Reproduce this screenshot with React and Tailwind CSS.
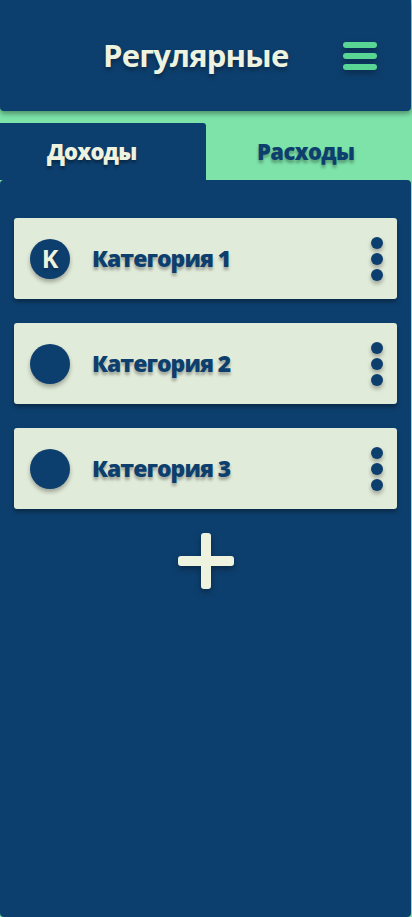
import React from "react";

const font = { fontFamily: '"Open Sans", "Noto Sans", sans-serif' };

function Card({ label, letter }) {
  return (
    <div className="flex h-[81px] items-center rounded-[3px] bg-[#e1ebd9] pl-[16px] pr-[14px] shadow-[0_3px_4px_rgba(0,0,0,0.35)]">
      <div className="flex h-[40px] w-[40px] items-center justify-center rounded-full bg-[#0d3f6e] shadow-[0_3px_4px_rgba(0,0,0,0.3)]">
        {letter && (
          <span className="text-[25px] font-bold leading-none text-[#eef3e0] [text-shadow:0_2px_3px_rgba(0,0,0,0.3)]">{letter}</span>
        )}
      </div>
      <span className="ml-[22px] flex-1 text-[23px] font-extrabold tracking-[-1px] text-[#0d3f6e] [text-shadow:0_3px_3px_rgba(0,0,0,0.3)]">
        {label}
      </span>
      <div className="flex flex-col gap-[4px] [filter:drop-shadow(0_3px_2px_rgba(0,0,0,0.3))]">
        <div className="h-[12px] w-[12px] rounded-full bg-[#0d3f6e]" />
        <div className="h-[12px] w-[12px] rounded-full bg-[#0d3f6e]" />
        <div className="h-[12px] w-[12px] rounded-full bg-[#0d3f6e]" />
      </div>
    </div>
  );
}

export default function App() {
  return (
    <div style={font} className="flex h-[917px] w-[412px] flex-col bg-[#7de3a9]">
      <header className="relative z-10 flex h-[111px] w-[411px] shrink-0 items-center rounded-b-[4px] bg-[#0d3f6e] shadow-[0_3px_5px_rgba(0,0,0,0.35)]">
        <h1 className="ml-[103px] text-[31px] font-bold tracking-[-0.8px] text-[#eef3e0] [text-shadow:0_3px_4px_rgba(0,0,0,0.35)]">
          Регулярные
        </h1>
        <div className="ml-auto mr-[34px] flex flex-col gap-[5px] [filter:drop-shadow(0_3px_3px_rgba(0,0,0,0.35))]">
          <div className="h-[6px] w-[34px] rounded-full bg-[#5ad694]" />
          <div className="h-[6px] w-[34px] rounded-full bg-[#5ad694]" />
          <div className="h-[6px] w-[34px] rounded-full bg-[#5ad694]" />
        </div>
      </header>
      <div className="flex h-[69px] shrink-0 items-end">
        <div className="flex h-[57px] w-[206px] items-center rounded-tr-[3px] bg-[#0d3f6e] pl-[47px]">
          <span className="text-[22px] font-extrabold tracking-[-0.8px] text-[#eef3e0] [text-shadow:0_3px_3px_rgba(0,0,0,0.35)]">
            Доходы
          </span>
        </div>
        <div className="flex h-[57px] flex-1 items-center pl-[51px]">
          <span className="text-[22px] font-extrabold tracking-[-0.6px] text-[#0d3f6e] [text-shadow:0_3px_3px_rgba(0,0,0,0.3)]">
            Расходы
          </span>
        </div>
      </div>
      <main className="flex w-[411px] flex-1 flex-col gap-[24px] rounded-[4px] bg-[#0d3f6e] px-[14px] pt-[38px]">
        <Card label="Категория 1" letter="K" />
        <Card label="Категория 2" />
        <Card label="Категория 3" />
        <div className="flex justify-center">
          <div className="relative h-[56px] w-[56px] [filter:drop-shadow(0_3px_3px_rgba(0,0,0,0.35))]">
            <div className="absolute left-[23px] top-0 h-[56px] w-[10px] rounded-[3px] bg-[#eef3e0]" />
            <div className="absolute left-0 top-[23px] h-[10px] w-[56px] rounded-[3px] bg-[#eef3e0]" />
          </div>
        </div>
      </main>
    </div>
  );
}
